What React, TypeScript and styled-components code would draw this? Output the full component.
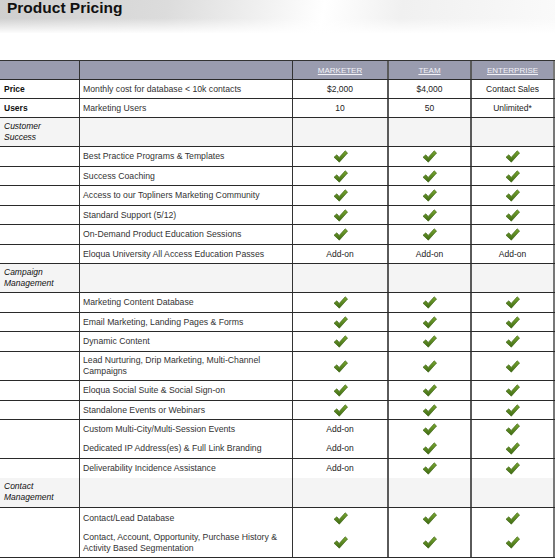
import React from "react";
import styled, { createGlobalStyle } from "styled-components";

const Global = createGlobalStyle`
  html, body { margin: 0; padding: 0; background: #fff; }
  body { font-family: "Liberation Sans", Arial, sans-serif; }
`;

const Page = styled.div`
  width: 555px;
  height: 558px;
  overflow: hidden;
  display: flex;
  flex-direction: column;
`;

const Banner = styled.div`
  height: 33px;
  padding: 0 0 0 7px;
  background:
    linear-gradient(180deg, rgba(255,255,255,0) 55%, rgba(255,255,255,0.95) 100%),
    linear-gradient(100deg, #cfcfcf 0%, #dcdcdc 30%, #f2f2f2 48%, #ffffff 58%, #f0f0f0 72%, #fafafa 100%);
`;

const Title = styled.h1`
  margin: 0;
  font-size: 15.5px;
  line-height: 16px;
  font-weight: bold;
  color: #111;
`;

const Table = styled.div`
  margin-top: 27px;
  border-top: 1px solid #333;
  display: flex;
  flex-direction: column;
`;

const Row = styled.div<{ $h: number; $noLine?: boolean; $bg?: string }>`
  display: grid;
  grid-template-columns: 80px 213px 96px 83px 83px;
  height: ${(p) => p.$h}px;
  box-sizing: border-box;
  border-bottom: ${(p) => (p.$noLine ? "none" : "1px solid #2a2a2a")};
  background: ${(p) => p.$bg || "#fff"};
`;

const Cell = styled.div<{ $right?: string; $align?: string }>`
  box-sizing: border-box;
  border-right: ${(p) => p.$right || "1px solid #333"};
  display: flex;
  align-items: center;
  justify-content: ${(p) => p.$align || "flex-start"};
  font-size: 8px;
  line-height: 11px;
  color: #333;
  overflow: hidden;
  white-space: nowrap;
`;

const LabelCell = styled(Cell)<{ $italic?: boolean; $bold?: boolean }>`
  padding-left: 4px;
  font-size: 8.5px;
  font-style: ${(p) => (p.$italic ? "italic" : "normal")};
  font-weight: ${(p) => (p.$bold ? "bold" : "normal")};
  color: #111;
  align-items: ${(p) => (p.$italic ? "flex-start" : "center")};
  padding-top: ${(p) => (p.$italic ? "3px" : "0")};
`;

const FeatureCell = styled(Cell)`
  padding-left: 3px;
  padding-right: 2px;
  font-size: 8.7px;
  color: #333;
`;

const HeadLink = styled.span`
  color: #f2f2f8;
  text-decoration: underline;
  font-size: 8px;
`;

const Addon = styled.span`
  color: #222;
  font-size: 8.5px;
`;

const Check = () => (
  <svg width="15" height="13" viewBox="0 0 15 13">
    <defs>
      <linearGradient id="cg" x1="0" y1="0" x2="0" y2="1">
        <stop offset="0" stopColor="#7aa832" />
        <stop offset="1" stopColor="#3e6a12" />
      </linearGradient>
    </defs>
    <path d="M1 7.2 L3.8 4.8 L6.2 7.4 L12.2 0.8 L14.6 3 L6.3 12.2 Z" fill="url(#cg)" stroke="#355d0e" strokeWidth="0.6" />
  </svg>
);

const C1 = "1px solid #333";
const C2 = "1px solid #333";
const C3 = "2px solid #5a5a5a";
const C4 = "2px solid #5a5a5a";
const C5 = "2px solid #777";

type V = "c" | "a" | string;

const Val = ({ v }: { v: V }) =>
  v === "c" ? <Check /> : v === "a" ? <Addon>Add-on</Addon> : <Addon>{v}</Addon>;

const Values = ({ vals }: { vals: V[] }) => (
  <>
    <Cell $right={C3} $align="center"><Val v={vals[0]} /></Cell>
    <Cell $right={C4} $align="center"><Val v={vals[1]} /></Cell>
    <Cell $right={C5} $align="center"><Val v={vals[2]} /></Cell>
  </>
);

const Feature = ({ h, text, vals, noLine }: { h: number; text: React.ReactNode; vals: V[]; noLine?: boolean }) => (
  <Row $h={h} $noLine={noLine}>
    <LabelCell $right={C1} />
    <FeatureCell $right={C2}>{text}</FeatureCell>
    <Values vals={vals} />
  </Row>
);

const Section = ({ h, label }: { h: number; label: React.ReactNode }) => (
  <Row $h={h} $bg="#f4f4f4">
    <LabelCell $right={C1} $italic>{label}</LabelCell>
    <Cell $right={C2} />
    <Cell $right={C3} />
    <Cell $right={C4} />
    <Cell $right={C5} />
  </Row>
);

const ccc: V[] = ["c", "c", "c"];
const acc: V[] = ["a", "c", "c"];

export default function App() {
  return (
    <Page>
      <Global />
      <Banner>
        <Title>Product Pricing</Title>
      </Banner>
      <Table>
        <Row $h={19} $bg="#9a9caf">
          <Cell $right={C1} />
          <Cell $right={C2} />
          <Cell $right={C3} $align="center"><HeadLink>MARKETER</HeadLink></Cell>
          <Cell $right={C4} $align="center"><HeadLink>TEAM</HeadLink></Cell>
          <Cell $right={C5} $align="center"><HeadLink>ENTERPRISE</HeadLink></Cell>
        </Row>
        <Row $h={19}>
          <LabelCell $right={C1} $bold>Price</LabelCell>
          <FeatureCell $right={C2}>Monthly cost for database &lt; 10k contacts</FeatureCell>
          <Values vals={["$2,000", "$4,000", "Contact Sales"]} />
        </Row>
        <Row $h={19}>
          <LabelCell $right={C1} $bold>Users</LabelCell>
          <FeatureCell $right={C2}>Marketing Users</FeatureCell>
          <Values vals={["10", "50", "Unlimited*"]} />
        </Row>
        <Section h={29} label={<>Customer<br />Success</>} />
        <Feature h={20} text="Best Practice Programs & Templates" vals={ccc} />
        <Feature h={19} text="Success Coaching" vals={ccc} />
        <Feature h={20} text="Access to our Topliners Marketing Community" vals={ccc} />
        <Feature h={19} text="Standard Support (5/12)" vals={ccc} />
        <Feature h={20} text="On-Demand Product Education Sessions" vals={ccc} />
        <Feature h={19} text="Eloqua University All Access Education Passes" vals={["a", "a", "a"]} />
        <Section h={29} label={<>Campaign<br />Management</>} />
        <Feature h={20} text="Marketing Content Database" vals={ccc} />
        <Feature h={19} text="Email Marketing, Landing Pages & Forms" vals={ccc} />
        <Feature h={20} text="Dynamic Content" vals={ccc} />
        <Feature h={29} text={<>Lead Nurturing, Drip Marketing, Multi-Channel<br />Campaigns</>} vals={ccc} />
        <Feature h={20} text="Eloqua Social Suite & Social Sign-on" vals={ccc} />
        <Feature h={19} text="Standalone Events or Webinars" vals={ccc} />
        <Feature h={19} noLine text="Custom Multi-City/Multi-Session Events" vals={acc} />
        <Feature h={20} text="Dedicated IP Address(es) & Full Link Branding" vals={acc} />
        <Feature h={19} noLine text="Deliverability Incidence Assistance" vals={acc} />
        <Section h={30} label={<>Contact<br />Management</>} />
        <Feature h={20} noLine text="Contact/Lead Database" vals={ccc} />
        <Feature h={30} text={<>Contact, Account, Opportunity, Purchase History &amp;<br />Activity Based Segmentation</>} vals={ccc} />
      </Table>
    </Page>
  );
}
